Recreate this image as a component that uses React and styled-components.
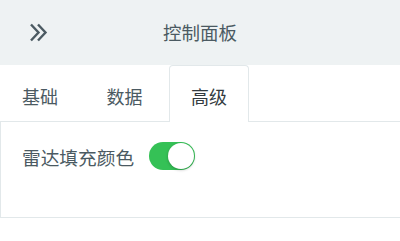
import React, { useState } from 'react';
import styled, { createGlobalStyle } from 'styled-components';

const GlobalStyle = createGlobalStyle`
    html, body {
        margin: 0;
        padding: 0;
        background: #fff;
    }
    body {
        font-family: "Noto Sans CJK SC", "Noto Sans", sans-serif;
        width: 400px;
        overflow: hidden;
    }
`;

const Header = styled.header`
    height: 65px;
    background: #eef2f3;
    display: grid;
    grid-template-columns: 80px 1fr 80px;
    align-items: center;
    color: #4b5a62;
`;

const BackButton = styled.button`
    border: 0;
    background: none;
    padding: 0;
    margin-left: 29px;
    width: 20px;
    height: 20px;
    display: flex;
    cursor: pointer;
    color: inherit;
`;

const Title = styled.h1`
    margin: 0;
    font-size: 18.5px;
    font-weight: 400;
    text-align: center;
    line-height: 1;
`;

const TabList = styled.div`
    display: flex;
    gap: 4.5px;
    height: 56px;
    border-bottom: 1px solid #e2e8ea;
`;

const Tab = styled.button`
    width: 80px;
    height: ${p => (p.$active ? '57px' : '56px')};
    padding: 4px 0 0;
    margin: 0;
    box-sizing: border-box;
    background: #fff;
    border: 1px solid ${p => (p.$active ? '#e2e8ea' : 'transparent')};
    border-bottom: 0;
    border-radius: 4px 4px 0 0;
    font-family: inherit;
    font-size: 18px;
    color: ${p => (p.$active ? '#333b40' : '#4b5a62')};
    cursor: pointer;
`;

const Panel = styled.section`
    box-sizing: border-box;
    height: 96px;
    border-left: 1px solid #e2e8ea;
    border-bottom: 1px solid #e2e8ea;
    padding: 20px 21px 0;
`;

const Row = styled.div`
    display: flex;
    align-items: center;
    gap: 15px;
    height: 28px;
`;

const Label = styled.span`
    font-size: 18.7px;
    color: #4b5a62;
`;

const Switch = styled.button`
    position: relative;
    width: 46px;
    height: 28px;
    padding: 0;
    border: 0;
    border-radius: 14px;
    background: ${p => (p.$on ? '#35c156' : '#dfe4e6')};
    cursor: pointer;
`;

const Knob = styled.span`
    position: absolute;
    top: 1px;
    left: ${p => (p.$on ? '19px' : '1px')};
    width: 26px;
    height: 26px;
    border-radius: 50%;
    background: #fff;
    box-shadow: 0 1px 3px rgba(0, 0, 0, 0.25);
`;

const tabs = ['基础', '数据', '高级'];

export default function App() {
    const [active, setActive] = useState(2);
    const [fill, setFill] = useState(true);
    return (
        <>
            <GlobalStyle />
            <Header>
                <BackButton aria-label="collapse">
                    <svg width="20" height="20" viewBox="0 0 20 20" fill="none" stroke="currentColor" strokeWidth="2.4">
                        <path d="M2 1.5 L9.5 9.5 L2 17.5" />
                        <path d="M9 1.5 L16.5 9.5 L9 17.5" />
                    </svg>
                </BackButton>
                <Title>控制面板</Title>
                <span />
            </Header>
            <TabList>
                {tabs.map((t, i) => (
                    <Tab key={t} $active={i === active} onClick={() => setActive(i)}>
                        {t}
                    </Tab>
                ))}
            </TabList>
            <Panel>
                <Row>
                    <Label>雷达填充颜色</Label>
                    <Switch $on={fill} onClick={() => setFill(!fill)}>
                        <Knob $on={fill} />
                    </Switch>
                </Row>
            </Panel>
        </>
    );
}
